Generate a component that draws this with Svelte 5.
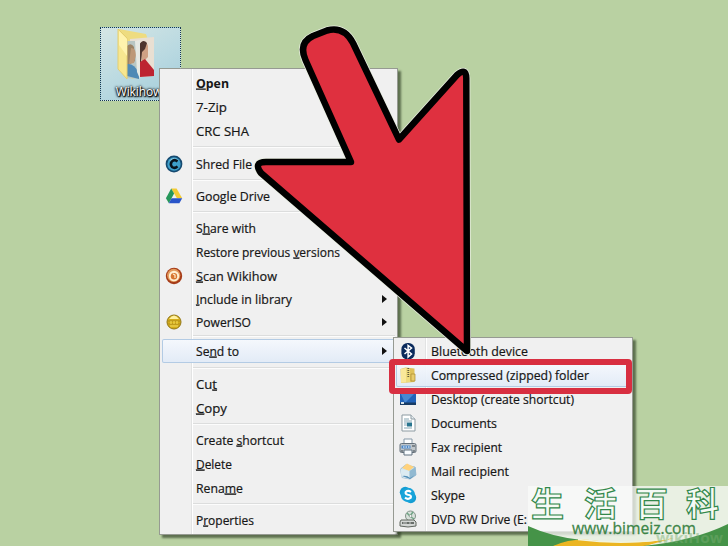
<script lang="ts">
	type Item = {
		label?: string;
		key?: number;
		width?: number;
		h: number;
		icon?: string;
		sub?: boolean;
		bold?: boolean;
		active?: boolean;
	};

	// key is the index of the underlined access letter
	const menu: Item[] = [
		{ label: 'Open', key: 0, width: 33, h: 24, bold: true },
		{ label: '7-Zip', width: 31, h: 24 },
		{ label: 'CRC SHA', width: 53, h: 24 },
		{ h: 8.5 },
		{ label: 'Shred File', width: 56, h: 24, icon: 'shred' },
		{ h: 8.5 },
		{ label: 'Google Drive', width: 74, h: 24, icon: 'drive' },
		{ h: 8 },
		{ label: 'Share with', key: 1, width: 60, h: 24 },
		{ label: 'Restore previous versions', key: 17, width: 144, h: 24 },
		{ label: 'Scan Wikihow', key: 0, width: 81, h: 23, icon: 'scan' },
		{ label: 'Include in library', key: 0, width: 96, h: 23, sub: true },
		{ label: 'PowerISO', width: 55, h: 23, icon: 'iso', sub: true },
		{ h: 6 },
		{ label: 'Send to', key: 2, width: 43, h: 24, sub: true, active: true },
		{ h: 9 },
		{ label: 'Cut', key: 2, width: 21, h: 24 },
		{ label: 'Copy', key: 0, width: 31, h: 24 },
		{ h: 8 },
		{ label: 'Create shortcut', key: 7, width: 88, h: 24 },
		{ label: 'Delete', key: 0, width: 36, h: 24 },
		{ label: 'Rename', key: 4, width: 47, h: 24 },
		{ h: 8 },
		{ label: 'Properties', key: 1, width: 58, h: 24 }
	];

	const sendTo: Item[] = [
		{ label: 'Bluetooth device', width: 97, h: 24, icon: 'bluetooth' },
		{ label: 'Compressed (zipped) folder', width: 158, h: 24, icon: 'zip', active: true },
		{ label: 'Desktop (create shortcut)', width: 143, h: 24, icon: 'desktop' },
		{ label: 'Documents', width: 66, h: 24, icon: 'doc' },
		{ label: 'Fax recipient', width: 71, h: 24, icon: 'fax' },
		{ label: 'Mail recipient', width: 78, h: 23.5, icon: 'mail' },
		{ label: 'Skype', width: 34, h: 24, icon: 'skype' },
		{ label: 'DVD RW Drive (E:', width: 96, h: 24, icon: 'dvd' }
	];
</script>

{#snippet glyph(name)}
	<svg class="icon" viewBox="0 0 18 18">
		{#if name === 'shred'}
			<circle cx="9" cy="9" r="8.4" fill="#164a70" />
			<circle cx="9" cy="9" r="6.7" fill="#3e9fcb" />
			<path d="M4 6Q9 0 14 6Q9 4 4 6" fill="#8acbe2" />
			<path d="M12.5 6.5Q9.5 3.7 6.8 6.5Q4.7 9.3 7 12Q9.8 14 12.5 11.4" fill="none" stroke="#08131d" stroke-width="2.5" />
		{:else if name === 'drive'}
			<path d="M6.2 1.5h5.4l5.6 9.7h-5.3z" fill="#f3cb35" />
			<path d="M6.2 1.5l2.9 5-5.2 9.8-3-5.1z" fill="#26975a" />
			<path d="M6.6 11.2h10.6l-2.8 5.1H3.8z" fill="#2854c9" />
		{:else if name === 'scan'}
			<circle cx="9" cy="9" r="8.2" fill="#a63c18" />
			<circle cx="8.7" cy="8.3" r="6.6" fill="#e39a5c" />
			<circle cx="9" cy="9" r="5.2" fill="#fff0d2" />
			<circle cx="9" cy="9.2" r="3.2" fill="#d8752f" />
			<path d="M8 7l2 1v3" fill="none" stroke="#fff2cf" stroke-width="1.2" />
		{:else if name === 'iso'}
			<circle cx="9" cy="9" r="7" fill="#d4ad19" stroke="#927719" />
			<path d="M4 6Q9-1 14 6z" fill="#fff1a0" />
			<path d="M3 8h12M3 11h12" stroke="#a58422" stroke-width=".8" />
			<path d="M6 8v3m3-3v3m3-3v3" stroke="#fae25a" />
			<path d="M5 13h8" stroke="#f4dc62" />
		{:else if name === 'bluetooth'}
			<rect x="2.4" y="1" width="13.4" height="16.5" rx="6.2" fill="#0a2a5c" />
			<path d="M5.5 6l7 6-3.4 3V3.5L12.5 6l-7 6" fill="none" stroke="#fff" stroke-width="1.5" />
		{:else if name === 'zip'}
			<path d="M1.5 3l5-1.5 9 1V16L2 17z" fill="#dfc25a" />
			<path d="M2 3l5-1v14.5L2 16.8z" fill="#f9e89a" />
			<path d="M7 2.2h4V16H7z" fill="#eedb7c" />
			<path d="M9.3 2v10" stroke="#655c3c" stroke-width="1.8" stroke-dasharray="1 1" />
			<path d="M12 8h4v7h-4z" fill="#e8cc6c" stroke="#a98b32" stroke-width=".7" />
		{:else if name === 'desktop'}
			<path d="M1 2h16v12H1z" fill="#2163b9" />
			<path d="M1 2h16L6 13z" fill="#4788d2" />
			<path d="M1 12.500h16V15H1z" fill="#183c65" />
			<path d="M2 12h3v2H2z" fill="#d8e4eb" />
		{:else if name === 'doc'}
			<path d="M3 1h9l4 4v12H3z" fill="#fff" stroke="#8d9ba2" />
			<path d="M12 1v4h4" fill="#e8eef1" stroke="#8d9ba2" />
			<path d="M5 5h5M5 7h8M5 14h8" stroke="#86a6b3" />
			<path d="M8 8.5h5v4H8z" fill="#28758f" />
			<path d="M5 9h3M5 11h3" stroke="#8dabbb" />
		{:else if name === 'fax'}
			<path d="M5 1h8v6H5z" fill="#fff" stroke="#8699a8" />
			<rect x="1" y="5.5" width="16" height="9" rx="1.5" fill="#c0c6ca" stroke="#65717b" />
			<path d="M2.500 7.500h9v3h-9z" fill="#4c88c8" />
			<path d="M4 9h7" stroke="#fff" stroke-dasharray="1.5 1" />
			<path d="M13 8h3M3 12v2m12-2v2" stroke="#39434a" />
			<path d="M5 12h8v5H5z" fill="#f8fcff" stroke="#60717e" />
		{:else if name === 'mail'}
			<path d="M1.500 7l5-4 9.500 2 1 8-6 4-8-1.500z" fill="#cee5f0" stroke="#7fa9c4" stroke-width=".7" />
			<path d="M3 6l5-4.500 7 3.500-5 4z" fill="#ffd27c" />
			<path d="M1.500 7l9 2v8l-8-2z" fill="#dcebf1" />
			<path d="M10.500 9l6-4 .5 8-6.500 4z" fill="#91b9d1" />
			<path d="M3 14q5-1 8 2l5-3-5 4z" fill="#538eb7" />
		{:else if name === 'skype'}
			<circle cx="6.2" cy="6.2" r="5.4" fill="#159dd2" />
			<circle cx="11.8" cy="11.8" r="5.4" fill="#159dd2" />
			<circle cx="9" cy="9" r="7.2" fill="#18a4da" />
			<path d="M12 6Q9 3.8 6.7 6Q6 8.3 9 8.8Q12.7 9.2 11.8 11.6Q9 14 6 11.6" fill="none" stroke="#fff" stroke-width="2.1" />
		{:else if name === 'dvd'}
			<circle cx="11.5" cy="6" r="5" fill="#d8e1db" stroke="#829288" />
			<path d="M8 3l3 3 3-4M12 7l3 2" stroke="#6fa585" stroke-width="1.5" fill="none" />
			<circle cx="11.5" cy="6" r="1.3" fill="#fff" stroke="#7a877e" stroke-width=".6" />
			<path d="M2 10h13l2 2v4q-8 2-16 0v-4z" fill="#d3d6d4" stroke="#60665f" />
			<path d="M3 13h12" stroke="#454b46" stroke-width="1.5" />
			<path d="M4 13h4m2 0h2" stroke="#eee" stroke-width=".7" />
		{/if}
	</svg>
{/snippet}

{#snippet rows(items)}
	{#each items as item}
		{#if item.label}
			<div class="row" class:active={item.active} style:height="{item.h}px">
				<span class="slot">{#if item.icon}{@render glyph(item.icon)}{/if}</span>
				<svg class="label" class:bold={item.bold} width={item.width} height="20">
					<text x="0" y="14.5" textLength={item.width} lengthAdjust="spacingAndGlyphs">{#if item.key !== undefined}{item.label.slice(0, item.key)}<tspan class="key">{item.label[item.key]}</tspan>{item.label.slice(item.key + 1)}{:else}{item.label}{/if}</text>
				</svg>
				{#if item.sub}<span class="caret"></span>{/if}
			</div>
		{:else}
			<div class="sep" style:height="{item.h}px"></div>
		{/if}
	{/each}
{/snippet}

<main class="desktop">
	<div class="folder">
		<svg width="42" height="54" viewBox="0 0 42 54">
			<path d="M3 1l27 5 2 6-8 35-8 4z" fill="#eedc80" />
			<path d="M14 11l24-2v39l-24 2z" fill="#e9dfd2" />
			<path d="M10 13h13v38l-13-1z" fill="#b8c6c3" />
			<path d="M11 18q4-4 7 1l1 14-8 5z" fill="#9b8264" />
			<path d="M15 20q5 0 5 7l-2 8-5 1z" fill="#bd9877" />
			<path d="M11 36q7-1 12 9v6l-12-3z" fill="#4e89b5" />
			<path d="M24 18q5-8 8 0v11l-6 6z" fill="#cfa184" />
			<path d="M23 17q4-7 8-2l-2 6-3 3-1 10h-2z" fill="#4d352e" />
			<path d="M24 34l5-3 9 11v6l-14 1z" fill="#bd2431" />
			<path d="M19 13l5-1v39l-3-7z" fill="#e6e9e3" />
			<path d="M2 1l9 9v41L2 41z" fill="#f7e790" stroke="#e4ce70" />
			<path d="M3 3l8 8v17L3 17z" fill="#fff3ad" />
		</svg>
		<span>Wikihow</span>
	</div>

	<div class="menu primary">{@render rows(menu)}</div>
	<div class="menu submenu">{@render rows(sendTo)}</div>

	<svg class="arrow" width="728" height="546" viewBox="0 0 728 546">
		<defs>
			<path id="pointer" d="M351 162L305.500 60Q298 43 313 36L327 30.500Q344 26 353 43L399 139.500L457 75Q466 67 466.300 78L467 351L261 173Q253 162 266 162Z" />
		</defs>
		<use href="#pointer" fill="none" stroke="#e8eee0" stroke-width="8" stroke-linejoin="round" />
		<use href="#pointer" fill="#df303f" stroke="#000" stroke-width="6.500" stroke-linejoin="round" />
	</svg>
	<div class="marker"></div>

	<div class="banner">
		<svg width="200" height="60" viewBox="0 0 200 60">
			<path d="M0 40Q24 51 54 54L26 60H0z" fill="#459348" />
			<path d="M25 60Q44 52 62 54Q105 60 146 52L117 60z" fill="#ebb522" />
			<path d="M50 53.500Q95 59 140 53" fill="none" stroke="#f2f5dd" stroke-width="1.500" />
			<path d="M115 60Q165 55 200 38V60z" fill="#459348" />
			<text class="ghost" x="128" y="57" textLength="67" lengthAdjust="spacingAndGlyphs">wikiHow</text>
			<g class="hanzi">
				<text x="3" y="30">生</text>
				<text x="56" y="30">活</text>
				<text x="107" y="30">百</text>
				<text x="158" y="30">科</text>
			</g>
			<text class="site" x="44" y="48" textLength="124" lengthAdjust="spacingAndGlyphs">www.bimeiz.com</text>
		</svg>
	</div>
</main>

<style>
	:global(body) {
		background: #b9d1a2;
	}

	.desktop {
		position: relative;
		width: 728px;
		height: 546px;
		overflow: hidden;
		background: #b9d1a2;
		font-family: 'Open Sans', 'Noto Sans', sans-serif;
	}

	.folder {
		position: absolute;
		left: 100px;
		top: 27px;
		width: 81px;
		height: 74px;
		box-sizing: border-box;
		border: 1px dotted #173850;
		background: linear-gradient(150deg, #d5e6e4, #b9d9e1 55%, #a2ccd9);
		display: flex;
		flex-direction: column;
		align-items: center;
	}

	.folder svg {
		margin-left: -7px;
		flex: none;
	}

	.folder span {
		margin-top: 1px;
		margin-left: -3px;
		font-size: 12px;
		line-height: 18px;
		letter-spacing: -0.1px;
		color: #fff;
		text-shadow: 1px 1px 1px #000, 0 0 2px #000, 0 0 3px #000, 0 1px 2px #111;
	}

	.menu {
		position: absolute;
		box-sizing: border-box;
		border: 1px solid #969a92;
		background: linear-gradient(90deg, #f0f0f0 31px, #e2e3e3 31px, #e2e3e3 32px, #fff 32px, #fff 33px, #f0f0f0 33px);
		box-shadow: 3px 3px 2px rgba(45, 60, 35, 0.65);
	}

	.primary {
		left: 159px;
		top: 68px;
		width: 239px;
		height: 467px;
		padding: 2px;
	}

	.submenu {
		left: 393px;
		top: 337px;
		width: 240px;
		height: 195px;
		padding: 1px 2px;
	}

	.row {
		display: flex;
		align-items: center;
		box-sizing: border-box;
	}

	.row.active {
		border-radius: 2px;
		background: linear-gradient(rgba(246, 249, 254, 0.9), rgba(224, 234, 247, 0.9));
		box-shadow: inset 0 0 0 1px #b3cbe4;
	}

	.slot {
		display: flex;
		width: 34px;
		padding-left: 3px;
		box-sizing: border-box;
		flex: none;
	}

	.icon {
		width: 18px;
		height: 18px;
	}

	.submenu .slot {
		width: 35px;
	}

	.label {
		display: block;
		overflow: visible;
		font-size: 12.5px;
		fill: #161616;
		stroke: #161616;
		stroke-width: 0.2px;
	}

	.label.bold {
		font-weight: 700;
		stroke: none;
	}

	.key {
		text-decoration: underline;
	}

	.caret {
		margin-left: auto;
		margin-right: 8px;
		border: 4px solid transparent;
		border-left: 5px solid #111;
		border-right: 0;
	}

	.sep {
		margin-left: 31px;
		display: flex;
		align-items: center;
	}

	.sep::after {
		content: '';
		flex: 1;
		height: 1px;
		background: #dcdddd;
		border-bottom: 1px solid #fcfcfc;
	}

	.arrow {
		position: absolute;
		left: 0;
		top: 0;
	}

	.marker {
		position: absolute;
		left: 389px;
		top: 359px;
		width: 243px;
		height: 35px;
		box-sizing: border-box;
		border: 6.5px solid #d82f41;
		border-radius: 4px;
	}

	.banner {
		position: absolute;
		left: 528px;
		top: 486px;
		width: 200px;
		height: 60px;
		background: rgba(250, 251, 250, 0.74);
	}

	.banner svg {
		display: block;
	}

	.hanzi {
		font-family: 'Noto Sans CJK SC', sans-serif;
		font-size: 33px;
		font-weight: 700;
		fill: #f5faf5;
		stroke: #32884b;
		stroke-width: 1.2px;
	}

	.site {
		font-size: 17px;
		fill: #3d8548;
		stroke: #3d8548;
		stroke-width: 0.3px;
	}

	.ghost {
		font-size: 14px;
		font-weight: 700;
		fill: #79ae72;
		opacity: 0.45;
	}
</style>
